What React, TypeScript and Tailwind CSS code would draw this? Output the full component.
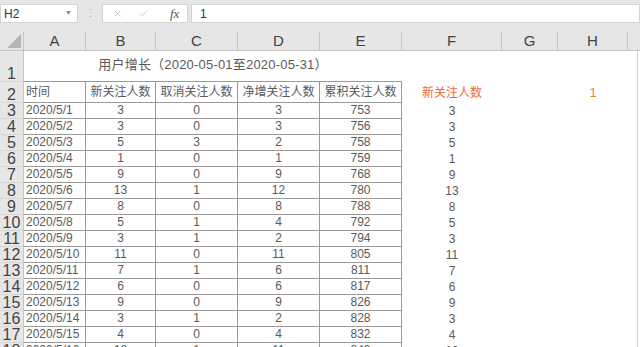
import { Check, X } from "lucide-react";

const SANS = "font-['Liberation_Sans','Noto_Sans_CJK_SC',sans-serif]";

// column widths incl. right border, starting at the row-header edge
const COLS = [
  { key: "A", w: "w-[62px]" },
  { key: "B", w: "w-[70px]" },
  { key: "C", w: "w-[82px]" },
  { key: "D", w: "w-[82px]" },
  { key: "E", w: "w-[82px]" },
  { key: "F", w: "w-[100px]" },
  { key: "G", w: "w-[56px]" },
  { key: "H", w: "w-[70px]" },
];

const ROWS: [string, number, number, number, number][] = [
  ["2020/5/1", 3, 0, 3, 753],
  ["2020/5/2", 3, 0, 3, 756],
  ["2020/5/3", 5, 3, 2, 758],
  ["2020/5/4", 1, 0, 1, 759],
  ["2020/5/5", 9, 0, 9, 768],
  ["2020/5/6", 13, 1, 12, 780],
  ["2020/5/7", 8, 0, 8, 788],
  ["2020/5/8", 5, 1, 4, 792],
  ["2020/5/9", 3, 1, 2, 794],
  ["2020/5/10", 11, 0, 11, 805],
  ["2020/5/11", 7, 1, 6, 811],
  ["2020/5/12", 6, 0, 6, 817],
  ["2020/5/13", 9, 0, 9, 826],
  ["2020/5/14", 3, 1, 2, 828],
  ["2020/5/15", 4, 0, 4, 832],
  ["2020/5/16", 12, 1, 11, 843],
];

const HEADS = ["时间", "新关注人数", "取消关注人数", "净增关注人数", "累积关注人数"];

function RowHead({ n, h }: { n: number; h: string }) {
  return (
    <div
      className={`${h} w-[24px] shrink-0 overflow-hidden border-r border-b border-r-[#c4c4c4] border-b-[#d6d6d6] bg-[#e6e6e6] flex items-end justify-center text-[16px] leading-[15px] text-[#444]`}
    >
      {n}
    </div>
  );
}

function Cell({
  w,
  children,
  align = "center",
  boxed = false,
  className = "",
}: {
  w: string;
  children?: React.ReactNode;
  align?: "left" | "center";
  boxed?: boolean;
  className?: string;
}) {
  return (
    <div
      className={`${w} shrink-0 h-full flex items-end pb-[1px] leading-[14px] ${
        align === "left" ? "justify-start pl-[2px]" : "justify-center"
      } ${boxed ? "border-r border-b border-[#9a9a9a]" : ""} ${className}`}
    >
      {children}
    </div>
  );
}

export default function App() {
  return (
    <div className={`w-[640px] h-[347px] overflow-hidden bg-white ${SANS} text-[12px] text-[#5a5a5a]`}>
      {/* formula bar */}
      <div className="h-[32px] bg-[#e6e6e6] pt-[4px]">
        <div className="flex h-[19px] items-stretch">
          <div className="w-[78px] bg-white border border-[#d4d4d4] flex items-center justify-between pl-[3px] pr-[5px] text-[12px] text-[#333]">
            <span>H2</span>
            <span className="text-[7px] text-[#888]">▼</span>
          </div>
          <div className="w-[24px] flex items-center justify-center text-[11px] text-[#b0b0b0]">⋮</div>
          <div className="w-[86px] bg-white border border-[#d4d4d4] flex items-center pl-[9px] gap-[15px] text-[#b4b4b4]">
            <X size={11} strokeWidth={1.4} />
            <Check size={11} strokeWidth={1.4} />
            <span className="font-['Liberation_Serif',serif] italic text-[13px] text-[#555] ml-[6px]">fx</span>
          </div>
          <div className="flex-1 ml-[3px] bg-white border border-[#d4d4d4] flex items-center pl-[8px] text-[12px] text-[#333]">
            1
          </div>
        </div>
      </div>

      {/* column headers */}
      <div className="flex h-[19px] bg-[#e6e6e6] border-b border-[#c6c6c6]">
        <div className="relative w-[24px] shrink-0 border-r border-[#c6c6c6]">
          <svg className="absolute right-[2px] bottom-[2px]" width="14" height="14" viewBox="0 0 14 14">
            <path d="M14 0 L14 14 L0 14 Z" fill="#b5b5b5" />
          </svg>
        </div>
        {COLS.map((c) => (
          <div
            key={c.key}
            className={`${c.w} shrink-0 border-r border-[#c6c6c6] flex items-center justify-center text-[15px] text-[#444]`}
          >
            {c.key}
          </div>
        ))}
        <div className="flex-1" />
      </div>

      {/* row 1 */}
      <div className="flex h-[31px]">
        <RowHead n={1} h="h-[31px]" />
        <div className="w-[378px] shrink-0 border-b border-[#9a9a9a] flex items-center justify-center pb-[2px] text-[13px] tracking-[0.2px]">
          用户增长（2020-05-01至2020-05-31）
        </div>
        <div className="flex-1 border-r border-[#d0d0d0] mr-[2px]" />
      </div>

      {/* row 2 */}
      <div className="flex h-[21px]">
        <RowHead n={2} h="h-[21px]" />
        {HEADS.map((t, i) => (
          <Cell key={t} w={COLS[i].w} boxed align={i === 0 ? "left" : "center"} className="pb-[3px] text-[12px]">
            {t}
          </Cell>
        ))}
        <Cell w={COLS[5].w} className="pb-[3px] text-[#f0643c]">新关注人数</Cell>
        <Cell w={COLS[6].w} />
        <Cell w={COLS[7].w} className="pb-[3px] text-[#f07a38]">1</Cell>
        <div className="flex-1 border-r border-[#d0d0d0] mr-[2px]" />
      </div>

      {/* data rows */}
      {ROWS.map((r, i) => (
        <div key={r[0]} className="flex h-[16px]">
          <RowHead n={i + 3} h="h-[16px]" />
          <Cell w={COLS[0].w} boxed align="left">{r[0]}</Cell>
          <Cell w={COLS[1].w} boxed>{r[1]}</Cell>
          <Cell w={COLS[2].w} boxed>{r[2]}</Cell>
          <Cell w={COLS[3].w} boxed>{r[3]}</Cell>
          <Cell w={COLS[4].w} boxed>{r[4]}</Cell>
          <Cell w={COLS[5].w}>{r[1]}</Cell>
          <Cell w={COLS[6].w} />
          <Cell w={COLS[7].w} />
          <div className="flex-1 border-r border-[#d0d0d0] mr-[2px]" />
        </div>
      ))}
    </div>
  );
}
